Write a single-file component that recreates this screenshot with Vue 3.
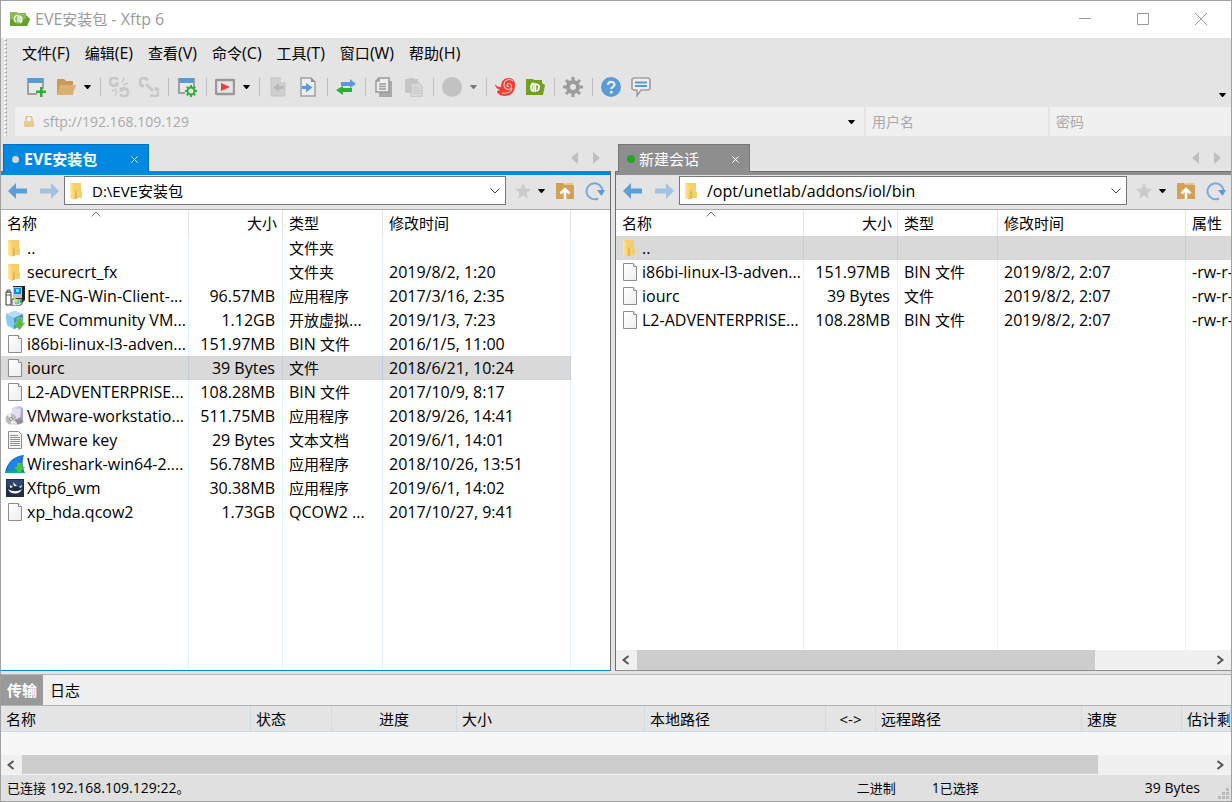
<script setup>
import { h } from 'vue'

const Label = (props) =>
  props.text
    .split(/([\u3000-\u9fff]+)/)
    .filter(Boolean)
    .map((part) => (/[\u3000-\u9fff]/.test(part) ? h('span', { class: 'han' }, part) : part))
Label.props = ['text']

const menus = ['文件(F)', '编辑(E)', '查看(V)', '命令(C)', '工具(T)', '窗口(W)', '帮助(H)']

const tools = [
  { icon: 'new', label: '新建' },
  { icon: 'open', label: '打开', drop: true },
  { sep: true },
  { icon: 'unlink', label: '断开' },
  { icon: 'link', label: '重新连接' },
  { sep: true },
  { icon: 'props', label: '属性' },
  { sep: true },
  { icon: 'play', label: '运行', drop: true },
  { sep: true },
  { icon: 'doc-left', label: '传输到左侧' },
  { icon: 'doc-right', label: '传输到右侧' },
  { sep: true },
  { icon: 'swap', label: '同步' },
  { sep: true },
  { icon: 'copy', label: '复制' },
  { icon: 'paste', label: '粘贴' },
  { sep: true },
  { icon: 'disc', label: '状态', drop: true, dim: true },
  { sep: true },
  { icon: 'shell', label: 'Xshell' },
  { icon: 'xftp', label: 'Xftp' },
  { sep: true },
  { icon: 'gear', label: '选项' },
  { sep: true },
  { icon: 'help', label: '帮助' },
  { icon: 'chat', label: '反馈' }
]

const panels = [
  {
    id: 'local',
    tab: 'EVE安装包',
    path: 'D:\\EVE安装包',
    last: '',
    files: [
      { icon: 'folder', name: '..', type: '文件夹' },
      { icon: 'folder', name: 'securecrt_fx', type: '文件夹', date: '2019/8/2, 1:20' },
      { icon: 'setup', name: 'EVE-NG-Win-Client-...', size: '96.57MB', type: '应用程序', date: '2017/3/16, 2:35' },
      { icon: 'cube', name: 'EVE Community VM...', size: '1.12GB', type: '开放虚拟...', date: '2019/1/3, 7:23' },
      { icon: 'file', name: 'i86bi-linux-l3-adven...', size: '151.97MB', type: 'BIN 文件', date: '2016/1/5, 11:00' },
      { icon: 'file', name: 'iourc', size: '39 Bytes', type: '文件', date: '2018/6/21, 10:24', on: true },
      { icon: 'file', name: 'L2-ADVENTERPRISE...', size: '108.28MB', type: 'BIN 文件', date: '2017/10/9, 8:17' },
      { icon: 'box', name: 'VMware-workstatio...', size: '511.75MB', type: '应用程序', date: '2018/9/26, 14:41' },
      { icon: 'text', name: 'VMware key', size: '29 Bytes', type: '文本文档', date: '2019/6/1, 14:01' },
      { icon: 'fin', name: 'Wireshark-win64-2....', size: '56.78MB', type: '应用程序', date: '2018/10/26, 13:51' },
      { icon: 'installer', name: 'Xftp6_wm', size: '30.38MB', type: '应用程序', date: '2019/6/1, 14:02' },
      { icon: 'file', name: 'xp_hda.qcow2', size: '1.73GB', type: 'QCOW2 ...', date: '2017/10/27, 9:41' }
    ]
  },
  {
    id: 'remote',
    tab: '新建会话',
    path: '/opt/unetlab/addons/iol/bin',
    last: '属性',
    scroll: 80,
    files: [
      { icon: 'folder', name: '..', on: true },
      { icon: 'file', name: 'i86bi-linux-l3-adven...', size: '151.97MB', type: 'BIN 文件', date: '2019/8/2, 2:07', attr: '-rw-r-' },
      { icon: 'file', name: 'iourc', size: '39 Bytes', type: '文件', date: '2019/8/2, 2:07', attr: '-rw-r-' },
      { icon: 'file', name: 'L2-ADVENTERPRISE...', size: '108.28MB', type: 'BIN 文件', date: '2019/8/2, 2:07', attr: '-rw-r-' }
    ]
  }
]

const queueColumns = ['名称', '状态', '进度', '大小', '本地路径', '<->', '远程路径', '速度', '估计剩']
const queueScroll = 90.6
</script>

<template>
  <div class="window">
    <svg class="defs" aria-hidden="true">
      <linearGradient id="g-folder" x1="0" x2="1"><stop offset="0" stop-color="#ffe9a2" /><stop offset="1" stop-color="#f6cd62" /></linearGradient>
      <linearGradient id="g-page" x1="0" y1="0" x2="1" y2="1"><stop offset="0" stop-color="#ffffff" /><stop offset="1" stop-color="#eeeeee" /></linearGradient>
      <symbol id="i-new" viewBox="0 0 20 20">
        <path d="M1 1h17v11h-2V6H3v10h8v2H1z" fill="#a0a0a0" /><path d="M3 6h13v10H3z" fill="#e9e9e9" /><path d="M2 1h15v5H2z" fill="#5b9bd5" />
        <path d="M14 10h2.500v3.500H20V16h-3.500v4H14v-4h-4v-2.500h4z" fill="#2fae34" />
      </symbol>
      <symbol id="i-open" viewBox="0 0 20 20">
        <path d="M1 2h7l2 2h7v14H1z" fill="#c99a57" /><path d="M4 8h16l-3.500 10H1z" fill="#dcb070" />
      </symbol>
      <symbol id="i-unlink" viewBox="0 0 20 20">
        <g fill="none" stroke="#c8c8c8" stroke-width="3"><path d="M8.500 3A4 4 0 1 0 6 8.500M8 5v3H5M11.500 17a4 4 0 1 0 2.500-5.500M12 15v-3h3" /><path d="M14 8l5-2M13 6l2-5M8 12l-5 2M8 14l-2 5" stroke-width="1.500" /></g>
      </symbol>
      <symbol id="i-link" viewBox="0 0 20 20">
        <g fill="none" stroke="#c8c8c8" stroke-width="3"><path d="M8.500 3.500A4 4 0 1 0 5 9M7 7l7 7M12 17a4 4 0 1 0 3.500-5.500" /></g>
      </symbol>
      <symbol id="i-props" viewBox="0 0 20 20">
        <path d="M1 1h17v9h-2V6H3v9h5v2H1z" fill="#a0a0a0" /><path d="M3 6h13v9H3z" fill="#e9e9e9" /><path d="M2 1h15v5H2z" fill="#5b9bd5" />
        <circle cx="14" cy="14" r="3.500" fill="#e4e4e4" stroke="#2fae34" stroke-width="2" /><path d="M14 8v2M14 18v2M8 14h2M18 14h2M9.800 9.800l1.400 1.400M16.800 16.800l1.400 1.400M18.200 9.800l-1.400 1.400M11.200 16.800l-1.400 1.400" stroke="#2fae34" stroke-width="2" />
      </symbol>
      <symbol id="i-play" viewBox="0 0 20 20">
        <rect x="1" y="3" width="18" height="14" rx="1" fill="#e6e6e6" stroke="#999" stroke-width="2.400" /><path d="M6 6l9 4-9 4z" fill="#f03c32" />
      </symbol>
      <symbol id="i-doc-left" viewBox="0 0 20 20">
        <path d="M3 1h10l4 4v14H3z" fill="#cfcfcf" stroke="#c4c4c4" /><path d="M13 1v4h4" fill="#eee" /><path d="M16 9v3h-5v3l-6-4.500L11 6v3z" fill="#b9b9b9" />
      </symbol>
      <symbol id="i-doc-right" viewBox="0 0 20 20">
        <path d="M3 1h10l4 4v14H3z" fill="#ededed" stroke="#a0a0a0" stroke-width="1.500" /><path d="M13 1v4h4z" fill="#8b8b8b" /><path d="M4 9v3h4v3.500l6.500-5L8 6v3z" fill="#5b9bd5" />
      </symbol>
      <symbol id="i-swap" viewBox="0 0 20 20">
        <path d="M5 5h9V2l6 5-6 4V9H5z" fill="#5b9bd5" /><path d="M16 11v4H7v3l-7-5 7-4v2z" fill="#2fae34" />
      </symbol>
      <symbol id="i-copy" viewBox="0 0 20 20">
        <path d="M5 4h13v16H5z" fill="#aaa" /><path d="M5 1h10v14H2V4z" fill="#eee" stroke="#999" stroke-width="1.500" /><path d="M5 1v3H2M5 7h7M5 9.500h7M5 12h7" fill="none" stroke="#999" stroke-width="1.500" />
      </symbol>
      <symbol id="i-paste" viewBox="0 0 20 20">
        <path d="M1 2h4V1h5v1h4v14H1z" fill="#c6c6c6" /><path d="M7 6h8l3 3v11H7z" fill="#d8d8d8" stroke="#c0c0c0" /><path d="M9 11h6M9 13.500h7M9 16h7" stroke="#c6c6c6" />
      </symbol>
      <symbol id="i-disc" viewBox="0 0 20 20"><circle cx="10" cy="10" r="10" fill="#c2c2c2" /></symbol>
      <symbol id="i-shell" viewBox="0 0 20 20">
        <path d="M0 7c1 2 3 3 6 3C6 4 9 1 14 1c4 0 6 3 6 7 0 7-4 11-10 11-5 0-8-3-8-5l3-1C2 12 0 10 0 7z" fill="#f03f35" />
        <path d="M18 4c-4-3-9-1-9 4 0 4 5 6 7 3 2-4-3-6-4-3-.5 1 1 2 2 1M7 16c5 1 9-1 10-5" fill="none" stroke="#f8c5bd" stroke-width="1.100" />
      </symbol>
      <symbol id="i-xftp" viewBox="0 0 20 20">
        <path d="M1 2h7l1 1h8v3l3 2-2 10H1z" fill="#73a020" /><path d="M8.500 6a4.500 4.500 0 0 0-2.500 4c0 2 1 4 2.500 4V6M10.500 15V7c3 0 4 2 3.500 4a5 5 0 0 1-2 3" fill="none" stroke="#fff" stroke-width="1.700" />
      </symbol>
      <symbol id="i-gear" viewBox="0 0 20 20">
        <circle cx="10" cy="10" r="5" fill="none" stroke="#9c9c9c" stroke-width="4" /><path d="M10 0v4M10 16v4M0 10h4M16 10h4M3 3l3 3M14 14l3 3M17 3l-3 3M6 14l-3 3" stroke="#9c9c9c" stroke-width="3" />
      </symbol>
      <symbol id="i-help" viewBox="0 0 20 20">
        <circle cx="10" cy="10" r="10" fill="#5b9bd5" /><path d="M7 8c0-4 6.500-4 6.500-.5 0 2.300-3.300 2.300-3.300 4.500" fill="none" stroke="#eee" stroke-width="2.200" /><path d="M9 14h2.500v2.500H9z" fill="#eee" />
      </symbol>
      <symbol id="i-chat" viewBox="0 0 20 20">
        <path d="M2.500 1h15L19 2.500v9L17.500 13H10l-4 5.500V13H2.500L1 11.500v-9z" fill="#eee" stroke="#a0a0a0" stroke-width="1.700" /><path d="M4 5.500h12M4 9h12" stroke="#5b9bd5" stroke-width="2" />
      </symbol>
      <symbol id="i-back" viewBox="0 0 20 20"><path d="M0 10l8-8v5.500h11v5H8V18z" fill="#5c9fd8" /></symbol>
      <symbol id="i-forward" viewBox="0 0 20 20"><path d="M20 10l-8-8v5.500H1v5h11V18z" fill="#a5c3e0" /></symbol>
      <symbol id="i-star" viewBox="0 0 20 20"><path d="M10 2l2.300 5.500 5.700.5-4.300 4 1.300 5.500-5-3-5 3L6.300 12 2 8l5.700-.5z" fill="#cbcbcb" /></symbol>
      <symbol id="i-up" viewBox="0 0 20 20">
        <path d="M1 2h7l2 2h9v14H1z" fill="#d3a057" /><path d="M8 4h10V2h-7z" fill="#e6c595" /><path d="M5.500 12.500L10 8l4.500 4.500M10 9v9" fill="none" stroke="#fff" stroke-width="2.500" />
      </symbol>
      <symbol id="i-refresh" viewBox="0 0 20 20">
        <path d="M13 17.500A8 8 0 1 1 17.500 10" fill="none" stroke="#78aadd" stroke-width="2" /><path d="M12 9h8l-3.500 6z" fill="#5b9bd5" />
      </symbol>
      <symbol id="i-caret" viewBox="0 0 8 5"><path d="M0 0h8v1L4.500 5h-1L0 1z" fill="currentColor" /></symbol>
      <symbol id="i-folder" viewBox="0 0 20 20">
        <path d="M3 2h11v8l1 1v6H3z" fill="#f6cf6c" /><path d="M3 2l5 2v15l-5-2z" fill="url(#g-folder)" /><path d="M8 9l2 2v7H8z" fill="#ddb959" />
      </symbol>
      <symbol id="i-file" viewBox="0 0 20 20">
        <path d="M3.500 1.500h10l3 3v14h-13z" fill="url(#g-page)" stroke="#8d8d8d" /><path d="M13.500 1.500v3h3" fill="#fff" stroke="#8d8d8d" />
      </symbol>
      <symbol id="i-text" viewBox="0 0 20 20">
        <path d="M3.500 1.500h10l3 3v14h-13z" fill="#f6f6f6" stroke="#8d8d8d" /><path d="M5 5.500h8M5 7.500h10M5 9.500h10M5 11.500h10M5 13.500h10M5 15.500h10" stroke="#909090" />
      </symbol>
      <symbol id="i-setup" viewBox="0 0 20 20">
        <path d="M8 0h12v14l-3 3h-4l-5-5z" fill="#222" /><path d="M8 1h9v11H8z" fill="#bfc5c8" /><path d="M9 2h7v6H9z" fill="#1687e0" /><path d="M11 3h3v3h-3z" fill="#5ee8ee" />
        <path d="M1 6h5v13H1z" fill="#fff" stroke="#333" /><path d="M1 9h5M2 4h3v2H2z" stroke="#555" fill="#ddd" /><path d="M7 13h10v5l-3 2H7z" fill="#e7e7e7" stroke="#555" /><circle cx="12" cy="16" r="2.500" fill="#5ac9c9" /><path d="M8 11l5 3-2 3z" fill="#ece645" /><path d="M15 14h2v3h-2z" fill="#2ba53b" />
      </symbol>
      <symbol id="i-cube" viewBox="0 0 20 20">
        <path d="M1 4l9-3 8 3v11l-9 4-7-4z" fill="#77bce8" /><path d="M1 4l8 4 9-4-8-3z" fill="#b5def4" /><path d="M9 8v11l-7-4L1 4z" fill="#8acbed" /><path d="M9 8l9-4v11l-9 4z" fill="#4495cb" /><path d="M12 8h5v5h3l-5.500 7L9 13h3z" fill="#55b943" stroke="#97d787" stroke-width=".7" />
      </symbol>
      <symbol id="i-box" viewBox="0 0 20 20">
        <path d="M7 2l8-2 3 2v15l-9 2z" fill="#c9c6e0" /><path d="M7 2l9 1-1 14-6 2z" fill="#e2e0ef" /><path d="M16 3l2-1v15l-3 1z" fill="#aaa6cf" /><circle cx="6" cy="13" r="5.500" fill="#bcbcbc" /><path d="M6 13L2 9l4-1.500zM6 13l5 3-5 2.500z" fill="#eee" /><circle cx="6" cy="13" r="1.500" fill="#fff" stroke="#888" /><path d="M10 14l6-3v3l3 1-6 4z" fill="#8e8e99" />
      </symbol>
      <symbol id="i-fin" viewBox="0 0 20 20">
        <path d="M0 19C2 8 9 2 19 1c-2 4-2 12 1 18z" fill="#1668cc" /><path d="M2 16C4 8 10 4 17 2c-2 4-2 9 0 14z" fill="#2084e5" /><path d="M0 19l1-2c6-1 12-1 18 1l1 1z" fill="#0eae86" /><path d="M12 9h5v4h3l-5.500 6.500L9 13h3z" fill="#42ce22" />
      </symbol>
      <symbol id="i-installer" viewBox="0 0 20 20">
        <path d="M1 1h18v18H1z" fill="#1e2e4a" /><path d="M2 2h16v7H2z" fill="#30466b" /><path d="M3 11c4 3 10 3 14 0-2 6-12 6-14 0z" fill="#fff" /><path d="M8 4l4 4H9zM5 7l3 2-3 1zM14 9l3-2-1 3z" fill="#f2f5fa" />
      </symbol>
      <symbol id="i-app" viewBox="0 0 20 16">
        <path d="M0 1h7l1 1h8v4l4 2-3 7H0z" fill="#8cba58" /><path d="M0 8h16V4l4 4-3 7H0z" fill="#66a02f" /><circle cx="8" cy="8" r="5" fill="#88b95d" /><path d="M7 4a4 4 0 0 0-1 7M8 4v7M10 12a4 4 0 0 0 0-7v6" fill="none" stroke="#fff" stroke-width="1.300" />
      </symbol>
      <symbol id="i-lock" viewBox="0 0 12 12"><path d="M3 5V3a3 3 0 0 1 6 0v2" fill="none" stroke="#dfc48e" stroke-width="1.600" /><rect x="1" y="5" width="10" height="6" rx="1" fill="#e6ca92" /></symbol>
    </svg>

    <header class="title">
      <svg class="app-icon"><use href="#i-app" /></svg>
      <h1><Label text="EVE安装包 - Xftp 6" /></h1>
      <button aria-label="最小化"><svg viewBox="0 0 12 12"><path d="M0 5.500h12" /></svg></button>
      <button aria-label="最大化"><svg viewBox="0 0 12 12"><path d="M.5.5h11v11H.5z" /></svg></button>
      <button aria-label="关闭"><svg viewBox="0 0 12 12"><path d="M0 0l12 12M12 0L0 12" /></svg></button>
    </header>

    <div class="bars">
      <nav class="menu">
        <button v-for="m in menus" :key="m"><Label :text="m" /></button>
      </nav>
      <div class="toolbar">
        <template v-for="(t, i) in tools" :key="i">
          <span v-if="t.sep" class="sep"></span>
          <template v-else>
            <button class="tool" :aria-label="t.label"><svg><use :href="'#i-' + t.icon" /></svg></button>
            <button v-if="t.drop" class="drop" :class="{ dim: t.dim }" :aria-label="t.label + '菜单'"><svg><use href="#i-caret" /></svg></button>
          </template>
        </template>
        <button class="more" aria-label="更多按钮"><svg><use href="#i-caret" /></svg></button>
      </div>
      <div class="address">
        <div class="box host">
          <svg class="lock"><use href="#i-lock" /></svg>
          <input aria-label="主机" placeholder="sftp://192.168.109.129" />
          <button aria-label="历史记录"><svg class="caret"><use href="#i-caret" /></svg></button>
        </div>
        <div class="box"><input aria-label="用户名" placeholder="用户名" /></div>
        <div class="box"><input type="password" aria-label="密码" placeholder="密码" /></div>
      </div>
    </div>

    <main class="panels">
      <section v-for="p in panels" :key="p.id" class="panel" :class="p.id">
        <div class="tabs">
          <div class="tab">
            <button class="tab-name"><i class="dot"></i><Label :text="p.tab" /></button>
            <button class="close" aria-label="关闭标签"><svg viewBox="0 0 7 7"><path d="M.5.5l6 6M6.500.5l-6 6" /></svg></button>
          </div>
          <button class="nav" aria-label="上一个标签"><svg viewBox="0 0 8 12"><path d="M7 0v12L0 6z" /></svg></button>
          <button class="nav" aria-label="下一个标签"><svg viewBox="0 0 8 12"><path d="M0 0v12l7-6z" /></svg></button>
        </div>
        <div class="body">
          <div class="path">
            <button class="ico" aria-label="后退"><svg><use href="#i-back" /></svg></button>
            <button class="ico fwd" aria-label="前进"><svg><use href="#i-forward" /></svg></button>
            <div class="combo">
              <svg class="row-icon"><use href="#i-folder" /></svg>
              <input :aria-label="p.tab + '路径'" :value="p.path" />
              <button aria-label="展开路径"><svg viewBox="0 0 10 6"><path d="M.5.5L5 5 9.500.5" /></svg></button>
            </div>
            <button class="ico star" aria-label="收藏"><svg><use href="#i-star" /></svg></button>
            <button class="fav" aria-label="收藏菜单"><svg class="caret"><use href="#i-caret" /></svg></button>
            <button class="ico gap" aria-label="上级目录"><svg><use href="#i-up" /></svg></button>
            <button class="ico gap" aria-label="刷新"><svg><use href="#i-refresh" /></svg></button>
          </div>
          <div class="list">
            <table>
              <colgroup><col class="c-name" /><col class="c-size" /><col class="c-type" /><col class="c-date" /><col /></colgroup>
              <thead>
                <tr>
                  <th class="sorted">名称<svg viewBox="0 0 10 6"><path d="M.5 5.500L5 1l4.500 4.500" /></svg></th>
                  <th class="num">大小</th><th>类型</th><th>修改时间</th><th>{{ p.last }}</th>
                </tr>
              </thead>
              <tbody>
                <tr v-for="f in p.files" :key="f.name" :class="{ on: f.on }">
                  <td class="name"><div><svg class="row-icon"><use :href="'#i-' + f.icon" /></svg>{{ f.name }}</div></td>
                  <td class="num">{{ f.size }}</td>
                  <td><Label :text="f.type || ''" /></td>
                  <td>{{ f.date }}</td>
                  <td>{{ f.attr }}</td>
                </tr>
                <tr class="fill"><td v-for="n in 5" :key="n"></td></tr>
              </tbody>
            </table>
          </div>
          <div v-if="p.scroll" class="scroll">
            <button aria-label="向左滚动"><svg viewBox="0 0 8 10"><path d="M6.500 1l-5 4 5 4" /></svg></button>
            <div class="track"><div class="thumb" :style="{ width: p.scroll + '%' }"></div></div>
            <button aria-label="向右滚动"><svg viewBox="0 0 8 10"><path d="M1.500 1l5 4-5 4" /></svg></button>
          </div>
        </div>
      </section>
    </main>

    <section class="queue">
      <div class="queue-tabs"><button class="active">传输</button><button>日志</button></div>
      <div class="queue-table">
        <table>
          <colgroup><col v-for="(c, i) in queueColumns" :key="c" :class="'q' + i" /></colgroup>
          <thead><tr><th v-for="(c, i) in queueColumns" :key="c" :class="{ mid: i === 2 || i === 5 }">{{ c }}</th></tr></thead>
        </table>
      </div>
      <div class="scroll">
        <button aria-label="向左滚动"><svg viewBox="0 0 8 10"><path d="M6.500 1l-5 4 5 4" /></svg></button>
        <div class="track"><div class="thumb" :style="{ width: queueScroll + '%' }"></div></div>
        <button aria-label="向右滚动"><svg viewBox="0 0 8 10"><path d="M1.500 1l5 4-5 4" /></svg></button>
      </div>
    </section>

    <footer class="status">
      <span class="conn"><Label text="已连接 192.168.109.129:22。" /></span>
      <span class="mode"><Label text="二进制" /></span>
      <span class="chosen"><Label text="1已选择" /></span>
      <span class="bytes">39 Bytes</span>
      <svg class="grip" viewBox="0 0 12 12"><path d="M9 0h3v3H9zM5 4h3v3H5zM9 4h3v3H9zM1 8h3v3H1zM5 8h3v3H5zM9 8h3v3H9z" /></svg>
    </footer>
  </div>
</template>

<style>
body { margin: 0; background: #e4e4e4; }
.han { font-size: 15px; }
.status .han { font-size: 13px; }
</style>

<style scoped>
* { box-sizing: border-box; }
.window {
  height: 100vh; display: flex; flex-direction: column; overflow: hidden;
  border: 1px solid #a0a0a0; background: #e4e4e4; color: #000;
  font: 16px/24px "Open Sans", "Noto Sans CJK SC", sans-serif;
}
.defs { position: absolute; width: 0; height: 0; }
button { border: 0; padding: 0; margin: 0; background: none; font: inherit; color: inherit; display: flex; align-items: center; justify-content: center; }
input { border: 0; padding: 0; margin: 0; background: none; font: inherit; color: inherit; min-width: 0; flex: 1; outline: 0; }
svg { display: block; flex: none; }

.title { height: 37px; flex: none; display: flex; align-items: center; background: #fff; color: #999; padding: 0 1px 1px 9px; }
.app-icon { width: 20px; height: 16px; }
.title h1 { flex: 1; margin: 0 0 0 5px; font-size: 16px; font-weight: 400; white-space: nowrap; }
.title button { width: 58px; height: 36px; }
.title button svg { width: 12px; height: 12px; fill: none; stroke: #999; }

.bars { flex: none; padding: 0 0 0 14px; position: relative; }
.bars::before {
  content: ""; position: absolute; left: 3px; top: 0; bottom: 0; width: 4px;
  background: radial-gradient(circle at 1px 1px, #fff 1px, transparent 1px), radial-gradient(circle at 2px 2px, #aaa 1px, transparent 1px);
  background-size: 4px 4px;
}
.menu { display: flex; height: 32px; align-items: center; gap: 15px; padding: 0 0 2px 7px; }
.menu button { white-space: nowrap; }
.toolbar { display: flex; height: 37px; align-items: center; padding: 0 5px 3px 6px; }
.tool { width: 30px; height: 30px; }
.tool svg { width: 20px; height: 20px; }
.drop { width: 15px; height: 30px; padding-right: 2px; }
.drop svg, .more svg, .caret { width: 7px; height: 4px; }
.dim { color: #777; }
.sep { width: 8px; height: 18px; display: flex; justify-content: center; }
.sep::before { content: ""; width: 1px; background: #bdbdbd; }
.more { margin-left: auto; align-self: flex-end; height: 18px; }
.address { display: grid; grid-template-columns: minmax(0, 849fr) minmax(0, 182fr) minmax(0, 181fr); gap: 2px; }
.box { height: 29px; background: #f0f0f0; display: flex; align-items: center; padding: 0 9px 0 6px; font-size: 14px; }
.box input::placeholder { color: #a9a9a9; opacity: 1; }
.lock { width: 12px; height: 12px; margin: 0 8px 0 2px; }

.panels { flex: 1; min-height: 0; display: grid; grid-template-columns: minmax(0, 610fr) minmax(0, 616fr); gap: 4px; padding-top: 8px; }
.panel { display: flex; flex-direction: column; min-height: 0; }
.tabs { height: 27px; flex: none; display: flex; align-items: center; padding: 0 10px 0 2px; }
.tab { height: 28px; align-self: flex-start; display: flex; align-items: center; border: 1px solid #777; border-bottom: 0; color: #fff; padding: 1px 10px 0 8px; margin-right: auto; position: relative; background: #8e8e8e; }
.local .tab { width: 146px; background: #0089e0; border-color: #0070b8; font-weight: 700; }
.remote .tab { width: 132px; }
.remote .tabs { padding: 0 9px 0 3px; }
.dot { width: 7px; height: 7px; border-radius: 50%; background: #d6d6d6; margin-right: 5px; }
.remote .dot { width: 8px; height: 8px; margin-right: 4px; background: #28a428; }
.close { margin-left: auto; width: 7px; height: 20px; }
.close svg { width: 7px; height: 7px; fill: none; stroke: #fff; }
.nav { width: 8px; height: 20px; margin-left: 14px; }
.nav svg { width: 8px; height: 12px; fill: #bfbfbf; }
.body { flex: 1; min-height: 0; display: flex; flex-direction: column; border-top: 1px solid #6f6f6f; }
.local .body { border-right: 1px solid #6f6f6f; border-bottom: 1px solid #0089e0; }
.remote .body { border-left: 1px solid #6f6f6f; border-bottom: 1px solid #8e8e8e; }
.path { height: 38px; flex: none; display: flex; align-items: center; border-top: 3px solid #0089e0; border-bottom: 1px solid #aaa; padding: 0 5px 3px 7px; }
.remote .path { border-top-color: #8e8e8e; }
.ico, .ico svg { width: 20px; height: 20px; }
.fwd { margin-left: 11px; }
.combo { flex: 1; min-width: 0; height: 29px; margin: 0 7px 0 5px; border: 1px solid #777; background: #fff; display: flex; align-items: center; padding: 0 5px 0 2px; }
.combo input { font-size: 15px; margin-left: 5px; }
.remote .combo input { font-size: 16px; }
.combo button svg { width: 10px; height: 6px; fill: none; stroke: #444; }
.fav { margin-left: 5px; height: 20px; }
.gap { margin-left: 10px; }

.list { flex: 1; min-height: 0; overflow: hidden; background: #fff; }
table { width: 100%; table-layout: fixed; border-collapse: separate; border-spacing: 0; }
.list table { height: 100%; }
.c-name, .c-date { width: 188px; }
.c-size { width: 94px; }
.c-type { width: 100px; }
th, td { padding: 0 0 0 6px; text-align: left; white-space: nowrap; overflow: hidden; height: 24px; line-height: 24px; border-right: 1px solid #e5f3fd; }
th { height: 26px; font-size: 15px; font-weight: 400; border-color: #e3e3e3; }
th:last-child, td:last-child { border-right: 0; }
th.num { text-align: right; padding-right: 5px; }
td.num { text-align: right; padding: 0 7px 0 0; }
.sorted { position: relative; }
.sorted svg { position: absolute; left: 50%; top: 1px; width: 10px; height: 6px; margin-left: -4px; fill: none; stroke: #777; }
td.name { padding-left: 4px; }
td.name div { display: flex; align-items: center; gap: 2px; }
.row-icon { width: 20px; height: 20px; }
.on td { background: #d9d9d9; border-color: #c3ced8; }
.local .on td:last-child { background: none; }
.fill td { height: auto; }

.scroll { height: 19px; flex: none; display: flex; background: #f0f0f0; }
.remote .scroll { height: 20px; }
.scroll button { width: 21px; padding-right: 2px; }
.scroll svg { width: 8px; height: 10px; fill: none; stroke: #555; stroke-width: 2; }
.track { flex: 1; }
.thumb { height: 100%; background: #cdcdcd; }

.queue { flex: none; margin-top: 3px; border-top: 1px solid #b4b4b4; background: #f7f7f7; }
.queue-tabs { display: flex; height: 31px; background: #f0f0f0; border-bottom: 1px solid #b4b4b4; font-size: 15px; }
.queue-tabs button { width: 42px; }
.queue-tabs button + button { width: 44px; }
.queue-tabs .active { background: #999; color: #fff; font-weight: 700; }
.queue-table { overflow: hidden; height: 49px; }
.queue-table th { background: #e4e4e4; border-right: 1px solid #cddbe8; border-bottom: 1px solid #cddbe8; padding-left: 5px; }
.queue-table th.mid { text-align: center; padding: 0; }
.q0 { width: 250px; } .q1 { width: 81px; } .q2 { width: 125px; } .q3 { width: 188px; }
.q4 { width: 181px; } .q5 { width: 50px; } .q6 { width: 206px; } .q7 { width: 100px; }

.status { height: 27px; flex: none; display: flex; align-items: center; background: #e0e0e0; border-top: 1px solid #f2f2f2; font-size: 14px; padding: 0 8px 0 6px; position: relative; white-space: nowrap; }
.conn { flex: 1; }
.mode { width: 75px; }
.chosen { width: 213px; }
.bytes { margin-right: 23px; }
.grip { position: absolute; right: 2px; bottom: 1px; width: 12px; height: 12px; fill: #bbb; }
</style>
